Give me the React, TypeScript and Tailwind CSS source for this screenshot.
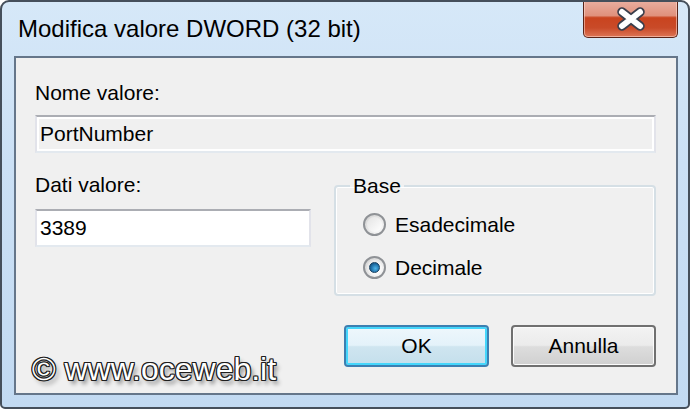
import React from 'react'

const font = { fontFamily: '"Liberation Sans", Arial, sans-serif' }

function CloseGlyph() {
  return (
    <svg width="32" height="24" viewBox="0 0 32 24">
      <path d="M7 5 L25 19 M25 5 L7 19" stroke="#3c3f4c" strokeWidth="9.5" strokeLinecap="round" fill="none" />
      <path d="M7 5 L25 19 M25 5 L7 19" stroke="#ffffff" strokeWidth="6" strokeLinecap="round" fill="none" />
    </svg>
  )
}

function Radio({ checked, label }: { checked?: boolean; label: string }) {
  return (
    <div className="flex items-center h-[43px]">
      <div className="ml-[13px] w-[23px] h-[23px] rounded-full border-2 border-[#8f9296] bg-[linear-gradient(135deg,#d2d2d2,#fdfdfd)] flex items-center justify-center">
        <div className="w-[15px] h-[15px] rounded-full bg-[linear-gradient(135deg,#e4e4e4,#ffffff)] flex items-center justify-center">
          {checked && (
            <div className="w-[11px] h-[11px] rounded-full border border-[#163f60] bg-[radial-gradient(circle_at_60%_60%,#4fb6ea,#1f6fa6_55%,#0f3f66)]" />
          )}
        </div>
      </div>
      <span className="ml-[9px] text-[21px] leading-[24px] text-black">{label}</span>
    </div>
  )
}

export default function App() {
  return (
    <div
      style={font}
      className="w-[690px] h-[409px] overflow-hidden border-2 border-[#454f5b] rounded-t-[9px] rounded-b-[5px] bg-[linear-gradient(180deg,#d6e8f8_0%,#cbe0f5_40%,#c2daf2_100%)] flex flex-col"
    >
      {/* Title bar */}
      <div className="h-[54px] flex items-start justify-between">
        <span className="pt-[13px] pl-[16px] text-[24px] leading-[28px] text-black">
          Modifica valore DWORD (32 bit)
        </span>
        <button className="mr-[10px] -mt-[2px] w-[95px] h-[38px] rounded-b-[5px] border border-t-0 border-[#5a2418] bg-[linear-gradient(180deg,#eab0a2_0%,#e0917c_42%,#c9441f_48%,#c94a28_75%,#dd7556_100%)] shadow-[inset_0_0_0_1px_rgba(255,220,210,0.55)] flex items-center justify-center">
          <CloseGlyph />
        </button>
      </div>

      {/* Client area */}
      <div className="flex-1 pl-[12px] pr-[10px] pb-[12px] flex">
        <div className="flex-1 border-2 border-[#65768a] bg-[#f0f0f0] pl-[19px] pr-[20px] pt-[23px] flex flex-col">
          <div className="text-[21px] leading-[24px] text-black">Nome valore:</div>
          <div className="mt-[10px] h-[38px] border-2 border-t-[#abadb3] border-x-[#e2e3ea] border-b-[#e3e9ef] bg-[#f0f0f0] shadow-[inset_0_0_0_2px_#ffffff] pl-[3px] flex items-center text-[21px] leading-[24px] text-black">
            PortNumber
          </div>

          <div className="flex mt-[20px]">
            <div className="w-[276px] flex flex-col">
              <div className="text-[21px] leading-[24px] text-black">Dati valore:</div>
              <div className="mt-[12px] h-[38px] border-2 border-t-[#abadb3] border-x-[#e2e3ea] border-b-[#e3e9ef] bg-white pl-[3px] flex items-center text-[21px] leading-[24px] text-black">
                3389
              </div>
            </div>

            <fieldset className="ml-[23px] mt-[1px] flex-1 border-2 border-[#d5dfe5] rounded-[4px] shadow-[inset_0_0_0_1px_#ffffff] pl-[14px] pt-[5px] pb-[5px]">
              <legend className="px-[3px] text-[21px] leading-[24px] text-black">Base</legend>
              <Radio label="Esadecimale" />
              <Radio label="Decimale" checked />
            </fieldset>
          </div>

          <div className="mt-[29px] flex justify-between items-start">
            <span className="-ml-[3px] mt-[26px] text-[32px] leading-[36px] text-white [text-shadow:-1px_0_0_#1e1e1e,1px_0_0_#1e1e1e,0_-1px_0_#1e1e1e,0_1px_0_#1e1e1e,-1px_-1px_0_#1e1e1e,1px_1px_0_#1e1e1e,-1px_1px_0_#1e1e1e,1px_-1px_0_#1e1e1e,3px_4px_4px_rgba(0,0,0,0.45)]">
              © www.oceweb.it
            </span>
            <div className="flex gap-[22px]">
              <button className="w-[145px] h-[42px] rounded-[4px] border-2 border-[#3c7fb1] shadow-[inset_0_0_0_2px_#45d6fb] bg-[linear-gradient(180deg,#eef7fc_0%,#e4f2fa_48%,#cfe5f0_52%,#c4dfec_100%)] text-[21px] leading-[24px] text-black">
                OK
              </button>
              <button className="w-[145px] h-[42px] rounded-[4px] border-2 border-[#707070] shadow-[inset_0_0_0_1px_#fbfbfb] bg-[linear-gradient(180deg,#f3f3f3_0%,#ebebeb_48%,#dddddd_52%,#d0d0d0_100%)] text-[21px] leading-[24px] text-black">
                Annulla
              </button>
            </div>
          </div>
        </div>
      </div>
    </div>
  )
}
